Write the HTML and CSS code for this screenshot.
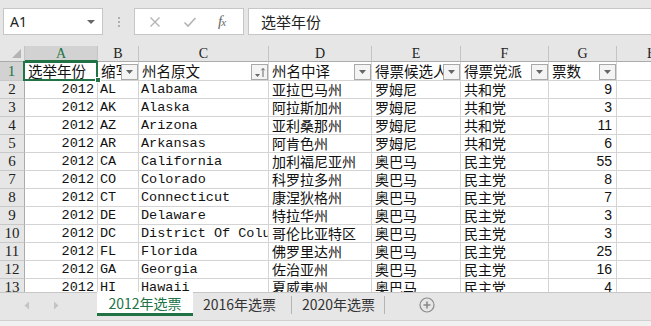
FILE: index.html
```html
<!DOCTYPE html>
<html lang="zh">
<head>
<meta charset="utf-8">
<link rel="stylesheet" href="styles.css">
</head>
<body>
<div class="app">
  <div class="toolbar">
    <div class="namebox"><span class="nb-text">A1</span><span class="nb-arrow"></span></div>
    <div class="dots"><i></i><i></i><i></i></div>
    <div class="fbtns">
      <svg class="ic-x" width="12" height="12" viewBox="0 0 12 12"><path d="M1.5 1.5L10.5 10.5M10.5 1.5L1.5 10.5" stroke="#b4b4b4" stroke-width="1.4" fill="none"/></svg>
      <svg class="ic-v" width="14" height="12" viewBox="0 0 14 12"><path d="M1.5 6.5L5 10L12.5 2" stroke="#b4b4b4" stroke-width="1.6" fill="none"/></svg>
      <span class="fx">f<small>x</small></span>
    </div>
    <div class="fbox">选举年份</div>
  </div>

  <div class="sheet">
    <div class="grid">
      <div class="ch corner"><span class="tri"></span></div>
      <div class="ch sel">A</div><div class="ch">B</div><div class="ch">C</div><div class="ch">D</div><div class="ch">E</div><div class="ch">F</div><div class="ch">G</div><div class="ch last">H</div>

      <div class="rh rsel">1</div>
      <div class="c h1 active"><span class="t">选举年份</span><span class="acell"></span><span class="handle"></span></div>
      <div class="c h1"><span class="t">缩写</span><span class="fb"><svg width="7" height="4" viewBox="0 0 7 4"><path d="M0 0H7L3.5 4Z" fill="#666"/></svg></span></div>
      <div class="c h1"><span class="t">州名原文</span><span class="fb"><svg width="12" height="11" viewBox="0 0 12 11"><path d="M1 7H6L3.5 10Z" fill="#666"/><path d="M9 10V1.5M7.3 3.3L9 1.5L10.7 3.3" stroke="#666" stroke-width="1" fill="none"/></svg></span></div>
      <div class="c h1"><span class="t">州名中译</span><span class="fb"><svg width="7" height="4" viewBox="0 0 7 4"><path d="M0 0H7L3.5 4Z" fill="#666"/></svg></span></div>
      <div class="c h1"><span class="t">得票候选人</span><span class="fb"><svg width="7" height="4" viewBox="0 0 7 4"><path d="M0 0H7L3.5 4Z" fill="#666"/></svg></span></div>
      <div class="c h1"><span class="t">得票党派</span><span class="fb"><svg width="7" height="4" viewBox="0 0 7 4"><path d="M0 0H7L3.5 4Z" fill="#666"/></svg></span></div>
      <div class="c h1"><span class="t">票数</span><span class="fb"><svg width="7" height="4" viewBox="0 0 7 4"><path d="M0 0H7L3.5 4Z" fill="#666"/></svg></span></div>
      <div class="c h1 last"></div>

      <div class="rh">2</div><div class="c num">2012</div><div class="c lat">AL</div><div class="c lat">Alabama</div><div class="c">亚拉巴马州</div><div class="c">罗姆尼</div><div class="c">共和党</div><div class="c vn">9</div><div class="c last"></div>
      <div class="rh">3</div><div class="c num">2012</div><div class="c lat">AK</div><div class="c lat">Alaska</div><div class="c">阿拉斯加州</div><div class="c">罗姆尼</div><div class="c">共和党</div><div class="c vn">3</div><div class="c last"></div>
      <div class="rh">4</div><div class="c num">2012</div><div class="c lat">AZ</div><div class="c lat">Arizona</div><div class="c">亚利桑那州</div><div class="c">罗姆尼</div><div class="c">共和党</div><div class="c vn">11</div><div class="c last"></div>
      <div class="rh">5</div><div class="c num">2012</div><div class="c lat">AR</div><div class="c lat">Arkansas</div><div class="c">阿肯色州</div><div class="c">罗姆尼</div><div class="c">共和党</div><div class="c vn">6</div><div class="c last"></div>
      <div class="rh">6</div><div class="c num">2012</div><div class="c lat">CA</div><div class="c lat">California</div><div class="c">加利福尼亚州</div><div class="c">奥巴马</div><div class="c">民主党</div><div class="c vn">55</div><div class="c last"></div>
      <div class="rh">7</div><div class="c num">2012</div><div class="c lat">CO</div><div class="c lat">Colorado</div><div class="c">科罗拉多州</div><div class="c">奥巴马</div><div class="c">民主党</div><div class="c vn">8</div><div class="c last"></div>
      <div class="rh">8</div><div class="c num">2012</div><div class="c lat">CT</div><div class="c lat">Connecticut</div><div class="c">康涅狄格州</div><div class="c">奥巴马</div><div class="c">民主党</div><div class="c vn">7</div><div class="c last"></div>
      <div class="rh">9</div><div class="c num">2012</div><div class="c lat">DE</div><div class="c lat">Delaware</div><div class="c">特拉华州</div><div class="c">奥巴马</div><div class="c">民主党</div><div class="c vn">3</div><div class="c last"></div>
      <div class="rh">10</div><div class="c num">2012</div><div class="c lat">DC</div><div class="c lat">District Of Columbia</div><div class="c">哥伦比亚特区</div><div class="c">奥巴马</div><div class="c">民主党</div><div class="c vn">3</div><div class="c last"></div>
      <div class="rh">11</div><div class="c num">2012</div><div class="c lat">FL</div><div class="c lat">Florida</div><div class="c">佛罗里达州</div><div class="c">奥巴马</div><div class="c">民主党</div><div class="c vn">25</div><div class="c last"></div>
      <div class="rh">12</div><div class="c num">2012</div><div class="c lat">GA</div><div class="c lat">Georgia</div><div class="c">佐治亚州</div><div class="c">奥巴马</div><div class="c">民主党</div><div class="c vn">16</div><div class="c last"></div>
      <div class="rh">13</div><div class="c num">2012</div><div class="c lat">HI</div><div class="c lat">Hawaii</div><div class="c">夏威夷州</div><div class="c">奥巴马</div><div class="c">民主党</div><div class="c vn">4</div><div class="c last"></div>
    </div>
  </div>

  <div class="tabbar">
    <div class="navs">
      <svg width="6" height="9" viewBox="0 0 6 9"><path d="M5 0.5V8.5L0.5 4.5Z" fill="#c4c4c4"/></svg>
      <svg width="6" height="9" viewBox="0 0 6 9"><path d="M1 0.5V8.5L5.5 4.5Z" fill="#c4c4c4"/></svg>
    </div>
    <div class="tab on">2012年选票</div>
    <div class="tab t2">2016年选票</div>
    <div class="tab t3">2020年选票</div>
    <div class="addtab"><svg width="16" height="16" viewBox="0 0 16 16"><circle cx="8" cy="8" r="7" stroke="#8a8a8a" stroke-width="1.2" fill="none"/><path d="M8 4.5V11.5M4.5 8H11.5" stroke="#8a8a8a" stroke-width="1.6"/></svg></div>
  </div>
  <div class="status"></div>
</div>
</body>
</html>
```

FILE: styles.css
```css
* { box-sizing: border-box; }
html, body { margin: 0; padding: 0; }
body {
  width: 651px;
  height: 326px;
  overflow: hidden;
  background: #e6e6e6;
  font-family: "Noto Sans CJK SC", "Liberation Sans", sans-serif;
}
.app { display: flex; flex-direction: column; width: 651px; height: 326px; }

/* toolbar */
.toolbar {
  height: 46px;
  flex: none;
  display: flex;
  align-items: flex-start;
  padding-top: 8px;
  background: #e6e6e6;
}
.namebox {
  margin-left: 3px;
  width: 100px;
  height: 27px;
  background: #fff;
  border: 1px solid #c6c6c6;
  display: flex;
  align-items: center;
  justify-content: space-between;
  padding: 0 7px 0 6px;
}
.nb-text { font-family: "Noto Sans", "Liberation Sans", sans-serif; font-size: 14px; color: #222; }
.nb-arrow {
  width: 0; height: 0;
  border-left: 4px solid transparent;
  border-right: 4px solid transparent;
  border-top: 4px solid #666;
}
.dots {
  width: 31px;
  height: 27px;
  display: flex;
  flex-direction: column;
  align-items: center;
  justify-content: center;
  gap: 2px;
}
.dots i { display: block; width: 2px; height: 2px; background: #b0b0b0; }
.fbtns {
  width: 110px;
  height: 27px;
  background: #fff;
  border: 1px solid #c6c6c6;
  display: flex;
  align-items: center;
  padding-left: 14px;
}
.ic-x { margin-right: 22px; }
.ic-v { margin-right: 21px; }
.fx { font-family: "Liberation Serif", serif; font-style: italic; font-size: 15px; color: #666; letter-spacing: -1px; }
.fx small { font-size: 11px; }
.fbox {
  margin-left: 4px;
  flex: 1;
  height: 27px;
  background: #fff;
  border: 1px solid #c6c6c6;
  border-right: none;
  padding-left: 12px;
  font-size: 15px;
  line-height: 25px;
  color: #222;
}

/* sheet */
.sheet {
  height: 246px;
  flex: none;
  overflow: hidden;
  background: #fff;
}
.grid {
  width: 687px;
  display: grid;
  grid-template-columns: 25px 73px 41px 130px 103px 89px 88px 68px 70px;
  grid-template-rows: 16px 19px;
  grid-auto-rows: 18px;
}
.ch {
  background: #e6e6e6;
  border-right: 1px solid #c4c4c4;
  border-bottom: 1px solid #ababab;
  font-family: "Liberation Serif", serif;
  font-size: 14px;
  line-height: 15px;
  text-align: center;
  color: #222;
}
.ch.last { border-right: none; }
.ch.sel { background: #d2d2d2; color: #217346; border-bottom: 2px solid #217346; }
.corner { position: relative; }
.tri {
  position: absolute;
  right: 3px;
  bottom: 3px;
  width: 0; height: 0;
  border-left: 9px solid transparent;
  border-bottom: 9px solid #b4b4b4;
}
.rh {
  background: #e6e6e6;
  border-right: 1px solid #ababab;
  border-bottom: 1px solid #c8c8c8;
  font-family: "Liberation Serif", serif;
  font-size: 15px;
  line-height: 17px;
  text-align: center;
  color: #222;
}
.rh.rsel { background: #d2d2d2; color: #217346; border-right: 2px solid #217346; line-height: 18px; }
.c {
  position: relative;
  border-right: 1px solid #d4d4d4;
  border-bottom: 1px solid #d4d4d4;
  white-space: nowrap;
  overflow: hidden;
  padding: 0 3px;
  font-size: 14px;
  line-height: 17px;
  color: #111;
}
.c.last { border-right: none; }
.c.h1 { line-height: 18px; overflow: visible; font-size: 14.5px; }
.c.h1 .t { display: block; overflow: hidden; }
.c.num { text-align: right; font-family: "Liberation Mono", monospace; font-size: 13.5px; padding-right: 3px; }
.c.lat { font-family: "Liberation Mono", monospace; font-size: 13.5px; padding-left: 2px; }
.c.vn { text-align: right; font-family: "Liberation Sans", sans-serif; font-size: 14px; padding-right: 4px; }
.fb {
  position: absolute;
  right: 0;
  top: 2px;
  width: 17px;
  height: 16px;
  background: #f4f4f4;
  border: 1px solid #a9a9a9;
  display: flex;
  align-items: center;
  justify-content: center;
}
.acell {
  position: absolute;
  left: -2px;
  top: -1px;
  width: 75px;
  height: 20px;
  border: 2px solid #217346;
}
.handle {
  position: absolute;
  right: -4px;
  bottom: -3px;
  width: 6px;
  height: 6px;
  background: #217346;
  border: 1px solid #fff;
  z-index: 2;
}

/* tabs */
.tabbar {
  height: 28px;
  flex: none;
  display: flex;
  align-items: flex-start;
  background: #e6e6e6;
  border-top: 1px solid #c6c6c6;
}
.navs {
  width: 97px;
  height: 24px;
  display: flex;
  align-items: center;
  gap: 23px;
  padding-left: 24px;
}
.tab {
  height: 23px;
  font-size: 14px;
  line-height: 22px;
  color: #333;
  white-space: nowrap;
}
.tab.on {
  width: 96px;
  height: 24px;
  margin-top: -1px;
  background: #fff;
  color: #217346;
  text-align: center;
  border-bottom: 3px solid #217346;
  line-height: 22px;
}
.tab.t2 { width: 99px; padding-left: 10px; border-right: 1px solid #b4b4b4; margin-top: 3px; height: 18px; line-height: 16px; }
.tab.t3 { width: 93px; padding-left: 10px; border-right: 1px solid #b4b4b4; margin-top: 3px; height: 18px; line-height: 16px; }
.addtab { margin-left: 34px; margin-top: 4px; display: flex; }
.status {
  flex: 1;
  background: #f1f1f1;
  border-top: 1px solid #d0d0d0;
}
```
